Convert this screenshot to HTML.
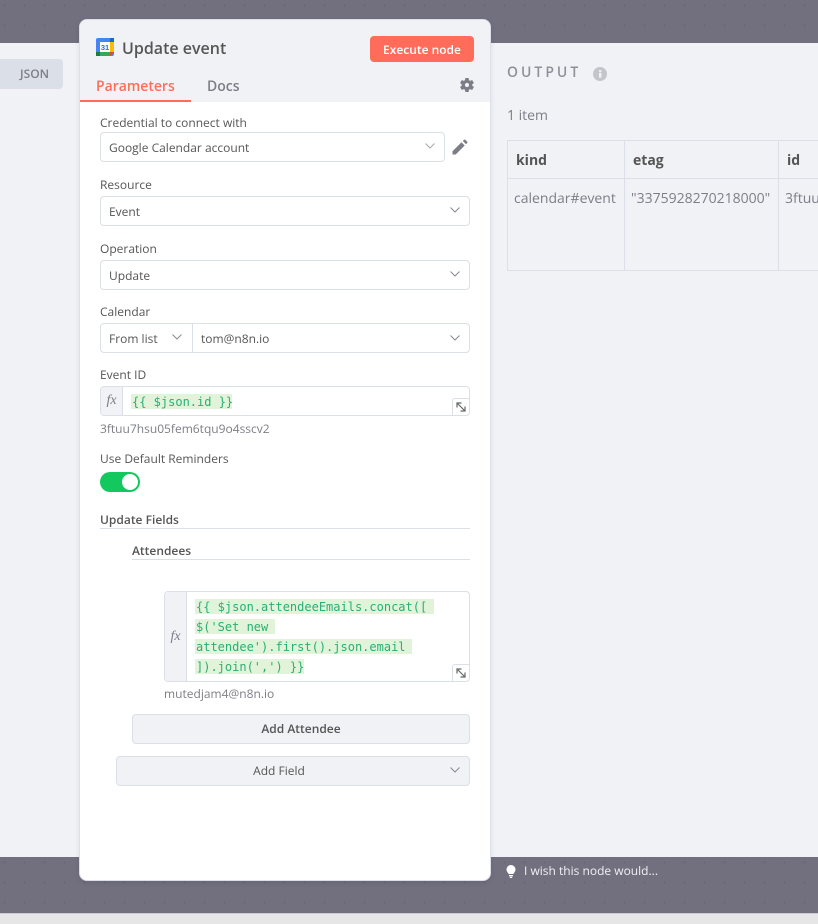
<!DOCTYPE html>
<html><head><meta charset="utf-8"><style>
html,body{margin:0;padding:0}
body{width:818px;height:924px;position:relative;overflow:hidden;background:#f1f2f6;font-family:"Open Sans","Liberation Sans","DejaVu Sans",sans-serif;font-size:12px;color:#555}
.a{position:absolute;white-space:nowrap}
.dark{position:absolute;left:0;width:818px;background-color:#72707f;background-image:radial-gradient(circle at 4.500px 5.500px,#686675 1px,transparent 1.100px);background-size:20px 20px}
.lbl{position:absolute;left:20px;font-size:12px;line-height:18px;color:#555;white-space:nowrap}
.sel{position:absolute;box-sizing:border-box;background:#fff;border:1px solid #dbdfe7;border-radius:4px;height:30px;line-height:30px;padding-left:8px;font-size:12px;color:#555;white-space:nowrap}
.chev{position:absolute;width:12px;height:8px}
.hint{position:absolute;font-size:12px;line-height:16px;color:#7d7d87;white-space:nowrap}
.fx{position:absolute;box-sizing:border-box;background:#f1f2f6;border-right:1px solid #dbdfe7;left:0;top:0;bottom:0;width:22px;font:italic 14px "Liberation Serif",serif;color:#7d7d87;display:flex;align-items:center;justify-content:center;border-radius:4px 0 0 4px}
.code{font-family:"DejaVu Sans Mono",monospace;font-size:12px;color:#2aae78;background:#e1f3d8;white-space:pre;height:15px;line-height:17px;box-sizing:border-box;padding-left:1px;overflow:hidden}
.exp{position:absolute;right:0;bottom:0;width:17px;height:17px;box-sizing:border-box;background:#fff;border-left:1px solid #dbdfe7;border-top:1px solid #dbdfe7;border-radius:3px 0 4px 0}
.btn{position:absolute;box-sizing:border-box;background:#f1f2f6;border:1px solid #dbdfe7;border-radius:4px;height:30px;line-height:28px;text-align:center;font-size:12px;color:#555}
.cell{position:absolute;box-sizing:border-box;border:1px solid #dbdfe7;white-space:nowrap;overflow:hidden}
</style></head><body>
<div class="dark" style="top:0;height:43px"></div>
<div class="dark" style="top:857px;height:56px;border-bottom:1px solid #c9c9d0;box-sizing:content-box"></div>
<div class="a" style="left:0;top:914px;width:818px;height:10px;background:#e6e6e6"></div>

<div class="a" style="left:0;top:59px;width:63px;height:30px;background:#dbdfe7;border-radius:0 4px 4px 0;line-height:30px;font-size:12px;font-weight:600;color:#7d7d87;text-indent:20px">JSON</div>

<!-- output -->
<div class="a" style="left:507px;top:64px;font-size:14px;font-weight:600;letter-spacing:3px;color:#8f8f99;line-height:18px">OUTPUT</div>
<svg class="a" style="left:593px;top:67px" width="14" height="14" viewBox="0 0 14 14"><circle cx="7" cy="7" r="7" fill="#c4c4ca"/><rect x="6" y="6" width="2.400" height="4.600" fill="#f1f2f6"/><rect x="6" y="3.200" width="2.400" height="2" fill="#f1f2f6"/></svg>
<div class="a" style="left:507px;top:107px;font-size:14px;line-height:18px;color:#7d7d87">1 item</div>
<div class="cell" style="left:507px;top:140px;width:118px;height:39px;font-size:14px;font-weight:700;line-height:39px;padding-left:8px;color:#555">kind</div>
<div class="cell" style="left:624px;top:140px;width:155px;height:39px;font-size:14px;font-weight:700;line-height:39px;padding-left:8px;color:#555">etag</div>
<div class="cell" style="left:778px;top:140px;width:60px;height:39px;font-size:14px;font-weight:700;line-height:39px;padding-left:8px;color:#555">id</div>
<div class="cell" style="left:507px;top:178px;width:118px;height:93px;font-size:14px;line-height:39px;padding-left:6px;color:#7d7d87">calendar#event</div>
<div class="cell" style="left:624px;top:178px;width:155px;height:93px;font-size:14px;line-height:39px;padding-left:6px;color:#7d7d87">"3375928270218000"</div>
<div class="cell" style="left:778px;top:178px;width:60px;height:93px;font-size:14px;line-height:39px;padding-left:6px;color:#7d7d87">3ftuu7hsu05</div>

<!-- panel -->
<div class="a" style="left:79px;top:19px;width:412px;height:862px;box-sizing:border-box;background:#fff;border:1px solid #dbdfe7;border-radius:8px;overflow:hidden;box-shadow:0 2px 6px rgba(0,0,0,.08);white-space:normal">
  <div style="position:absolute;left:0;top:0;width:410px;height:82px;background:#f1f2f6"></div>
  <div style="position:absolute;left:0;top:80px;width:111px;height:2px;background:#ff6d5a"></div>
</div>

<svg class="a" style="left:96px;top:38px" width="18" height="18" viewBox="0 0 18 18">
  <rect x="0" y="0" width="18" height="18" rx="2" fill="#4285f4"/>
  <rect x="14" y="0" width="4" height="4" fill="#1967d2"/>
  <rect x="14" y="4" width="4" height="10" fill="#fbbc04"/>
  <rect x="4" y="14" width="10" height="4" fill="#34a853"/>
  <rect x="0" y="14" width="4" height="4" fill="#188038"/>
  <path d="M14 14h4l-4 4z" fill="#ea4335"/>
  <rect x="4" y="4" width="10" height="10" fill="#fff"/>
  <text x="9" y="12" font-size="7.500" font-family="Liberation Sans" font-weight="700" text-anchor="middle" fill="#1a73e8">31</text>
</svg>
<div class="a" style="left:122px;top:37px;font-size:16px;font-weight:600;line-height:22px;color:#555">Update event</div>
<div class="a" style="left:370px;top:36px;width:104px;height:26px;background:#ff6d5a;border-radius:4px;color:#fff;text-align:center;line-height:27px;font-size:12px;font-weight:600">Execute node</div>
<div class="a" style="left:96px;top:77px;font-size:14px;font-weight:600;line-height:20px;color:#ff6d5a">Parameters</div>
<div class="a" style="left:207px;top:77px;font-size:14px;font-weight:600;line-height:20px;color:#7d7d87">Docs</div>
<svg class="a" style="left:460px;top:78px" width="14" height="14" viewBox="0.800 1.300 21.400 21.400"><path fill="#7d7d87" fill-rule="evenodd" d="M19.400 13c.1-.3.1-.7.1-1s0-.7-.1-1l2.300-1.700c.2-.2.3-.5.1-.7l-2.200-3.800c-.1-.2-.4-.3-.7-.2l-2.700 1.100c-.5-.4-1.100-.8-1.700-1L14.100 1.800c0-.3-.3-.5-.5-.5h-4.300c-.3 0-.5.2-.5.5L8.400 4.700c-.6.2-1.200.6-1.700 1L4 4.600c-.3-.1-.5 0-.7.2L1.100 8.600c-.1.2-.1.500.1.700L3.500 11c0 .3-.1.700-.1 1s0 .7.1 1l-2.300 1.700c-.2.200-.3.500-.1.700l2.200 3.800c.1.200.4.300.7.200l2.700-1.100c.5.400 1.100.8 1.700 1l.4 2.900c0 .3.200.5.500.5h4.300c.3 0 .5-.2.500-.5l.4-2.900c.6-.2 1.200-.6 1.700-1l2.700 1.100c.3.100.5 0 .7-.2l2.200-3.800c.1-.2.100-.5-.1-.7zM11.500 15.200a3.200 3.200 0 1 1 0-6.400 3.200 3.200 0 0 1 0 6.400z"/></svg>

<div class="lbl" style="left:100px;top:114px">Credential to connect with</div>
<div class="sel" style="left:100px;top:132px;width:345px">Google Calendar account</div>
<svg class="chev" style="left:424px;top:142px" viewBox="0 0 12 8"><path d="M1.500 1.500l4.500 4.500 4.500-4.500" fill="none" stroke="#a8a8b0" stroke-width="1"/></svg>
<svg class="a" style="left:452px;top:139px" width="16" height="16" viewBox="0 0 16 16"><path fill="#7d7d87" d="M0.500 12.300V15.500h3.200l9-9-3.200-3.200zM15.200 4c.4-.4.4-.9 0-1.300l-1.900-1.900c-.4-.4-.9-.4-1.300 0l-1.200 1.200 3.200 3.200z"/></svg>

<div class="lbl" style="left:100px;top:176px">Resource</div>
<div class="sel" style="left:100px;top:196px;width:370px">Event</div>
<svg class="chev" style="left:449px;top:206px" viewBox="0 0 12 8"><path d="M1.500 1.500l4.500 4.500 4.500-4.500" fill="none" stroke="#8a8a94" stroke-width="1"/></svg>

<div class="lbl" style="left:100px;top:240px">Operation</div>
<div class="sel" style="left:100px;top:260px;width:370px">Update</div>
<svg class="chev" style="left:449px;top:270px" viewBox="0 0 12 8"><path d="M1.500 1.500l4.500 4.500 4.500-4.500" fill="none" stroke="#8a8a94" stroke-width="1"/></svg>

<div class="lbl" style="left:100px;top:303px">Calendar</div>
<div class="sel" style="left:100px;top:323px;width:93px;border-radius:4px 0 0 4px">From list</div>
<svg class="chev" style="left:171px;top:333px" viewBox="0 0 12 8"><path d="M1.500 1.500l4.500 4.500 4.500-4.500" fill="none" stroke="#8a8a94" stroke-width="1"/></svg>
<div class="sel" style="left:192px;top:323px;width:278px;border-radius:0 4px 4px 0">tom@n8n.io</div>
<svg class="chev" style="left:449px;top:334px" viewBox="0 0 12 8"><path d="M1.500 1.500l4.500 4.500 4.500-4.500" fill="none" stroke="#8a8a94" stroke-width="1"/></svg>

<div class="lbl" style="left:100px;top:366px">Event ID</div>
<div class="a" style="left:100px;top:386px;width:370px;height:30px;box-sizing:border-box;background:#fff;border:1px solid #dbdfe7;border-radius:4px">
  <div class="fx">fx</div>
  <div class="a code" style="left:30px;top:7px;width:101px">{{ $json.id }}</div>
  <div class="exp"><svg style="position:absolute;left:2px;top:2px" width="12" height="12" viewBox="0 0 12 12"><path d="M2 6.500V2h4.500M2 2l8 8M10 5.500V10H5.500" fill="none" stroke="#666" stroke-width="1.200"/></svg></div>
</div>
<div class="hint" style="left:100px;top:421px">3ftuu7hsu05fem6tqu9o4sscv2</div>

<div class="lbl" style="left:100px;top:450px">Use Default Reminders</div>
<div class="a" style="left:100px;top:472px;width:40px;height:20px;border-radius:10px;background:#13c95f"></div>
<div class="a" style="left:122px;top:474px;width:16px;height:16px;border-radius:50%;background:#fff"></div>

<div class="a" style="left:100px;top:512px;font-weight:600;line-height:16px;color:#555">Update Fields</div>
<div class="a" style="left:100px;top:528px;width:370px;height:1px;background:#dbdfe7"></div>
<div class="a" style="left:132px;top:543px;font-weight:600;line-height:16px;color:#555">Attendees</div>
<div class="a" style="left:132px;top:559px;width:338px;height:1px;background:#dbdfe7"></div>

<div class="a" style="left:164px;top:591px;width:306px;height:91px;box-sizing:border-box;background:#fff;border:1px solid #dbdfe7;border-radius:4px">
  <div class="fx">fx</div>
  <div class="a code" style="left:30px;top:7px;width:239px">{{ $json.attendeeEmails.concat([ </div>
  <div class="a code" style="left:30px;top:27px;width:80px">$('Set new </div>
  <div class="a code" style="left:30px;top:47px;width:217px">attendee').first().json.email </div>
  <div class="a code" style="left:30px;top:67px;width:109px">]).join(',') }}</div>
  <div class="exp"><svg style="position:absolute;left:2px;top:2px" width="12" height="12" viewBox="0 0 12 12"><path d="M2 6.500V2h4.500M2 2l8 8M10 5.500V10H5.500" fill="none" stroke="#666" stroke-width="1.200"/></svg></div>
</div>
<div class="hint" style="left:164px;top:686px">mutedjam4@n8n.io</div>

<div class="btn" style="left:132px;top:714px;width:338px;font-weight:600">Add Attendee</div>
<div class="btn" style="left:116px;top:756px;width:354px;padding-right:28px">Add Field</div>
<svg class="chev" style="left:449px;top:766px" viewBox="0 0 12 8"><path d="M1.500 1.500l4.500 4.500 4.500-4.500" fill="none" stroke="#8a8a94" stroke-width="1"/></svg>

<svg class="a" style="left:506px;top:865px" width="10" height="13" viewBox="0 0 10 13"><path fill="#fff" d="M5 0a4.500 4.500 0 0 0-4.500 4.500c0 2 1.500 3 2 4.500h5c.5-1.500 2-2.500 2-4.500A4.500 4.500 0 0 0 5 0zM3 10h4v1.200H3zM3.800 11.800h2.400V13H3.800z"/></svg>
<div class="a" style="left:524px;top:863px;font-size:12px;line-height:16px;color:#f1f2f6">I wish this node would...</div>
</body></html>
